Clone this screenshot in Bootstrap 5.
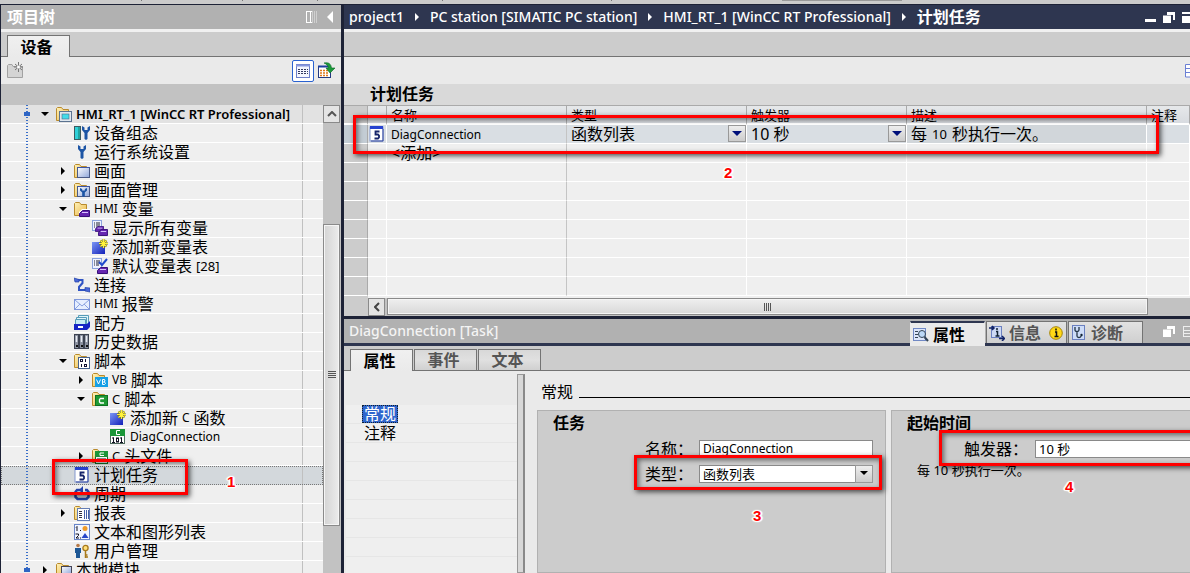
<!DOCTYPE html>
<html lang="zh-CN">
<head>
<meta charset="utf-8">
<meta name="viewport" content="width=device-width, initial-scale=1">
<title>project1 - 计划任务</title>
<link href="https://cdn.jsdelivr.net/npm/bootstrap@5.3.0/dist/css/bootstrap.min.css" rel="stylesheet">
<style>
:root{--ui:"Noto Sans","Noto Sans CJK SC",sans-serif;--navy:#2e3650;--ink:#1d2236;--bar:#b1b1b1;--strip:#ccc;--tool:#eaeaea;--line:#737373}
body{font-family:var(--ui);font-size:16px;line-height:18px;color:#000;background:var(--ink);height:100vh;overflow:hidden}
h1,h2,h3,p,ul{margin:0;padding:0}
button{border:0;background:none;padding:0;color:inherit;line-height:18px;white-space:nowrap}
a{color:inherit;text-decoration:none}
.lt{font-size:13px}
.ls{font-size:12px}
.tc{font-family:"Noto Sans CJK TC",sans-serif}
.ico{width:16px;height:16px;flex:none;display:block}
.topstrip{height:5px;background:#cbcbcb;border-bottom:1px solid var(--ink);flex:none}
.topstrip span{width:1px;height:1px;background:#777}
.topstrip .longmark{width:120px;background:#999}
.titlebar{height:24px;flex:none;color:#fff;font-size:16px;font-weight:700}
.titlebar .lt{font-size:14px;font-weight:500}
.bar-grey{background:var(--bar)}
.bar-navy{background:var(--navy)}
.tabstrip{background:var(--strip);border-bottom:1px solid var(--line);border-top:3px solid #f0f0f0;height:28px;flex:none}
.toolrow{background:var(--tool);height:27px;flex:none}
.tabbtn{border:1px solid var(--line);border-bottom:0;background:linear-gradient(#d8d8d8,#e0e0e0 50%,#d0d0d0);color:#555;font-size:16px;font-weight:700;width:63px;height:21px}
.tabbtn.on{background:linear-gradient(#f0f0f0,#eaeaea);color:#000;margin-bottom:-1px;height:22px}
/* project tree */
.side{width:340px;margin-left:1px;flex:none}
.treehost{background:#efefef;min-height:0}
.tree{list-style:none}
.tree li{height:19px;border-bottom:1px solid #fff;display:flex;align-items:center;white-space:nowrap;background:linear-gradient(90deg,transparent 301px,#c0c0c0 301px,#c0c0c0 302px,transparent 302px)}
.tree li:first-child{background-color:#e2e2e2;font-weight:600}
.tree li.sel{background-color:#d3d8dc;outline:1px dotted #777;outline-offset:-1px;border-bottom-color:#d3d8dc}
.tree button{width:14px;height:14px;margin-right:1px;flex:none;display:flex;align-items:center}
.tree button:empty{visibility:hidden}
.tree .ico{margin-right:4px}
.l0{padding-left:39px}.l1{padding-left:57px}.l2{padding-left:75px}.l3{padding-left:93px}
.tree .ico{margin-left:1px}
.guide{position:absolute;left:25px;top:0;bottom:0;width:2px;background:repeating-linear-gradient(#3a6fc8 0 1px,transparent 1px 3px)}
.knot{position:absolute;left:23px;width:6px;height:4px;background:#2f65c4}
.k1{top:7px}.k2{top:463px}
.vscroll{width:18px;background:#c2c2c2;flex:none}
.sbtn{width:17px;height:18px;border:1px solid #8a8a8a;background:#e4e4e4;display:flex;align-items:center;justify-content:center}
.vthumb{width:17px;height:302px;margin-top:101px;border:1px solid #8a8a8a;background:linear-gradient(90deg,#d4d4d4,#ececec);outline:1px solid #f5f5f5;outline-offset:-2px}
.grip{width:8px;height:8px;background:repeating-linear-gradient(#555 0 1px,transparent 1px 2px)}
.grip.gh{background:repeating-linear-gradient(90deg,#555 0 1px,transparent 1px 2px)}
/* task grid */
.work{margin-left:3px;min-width:0}
.gridtitle{background:#d9d9d9;height:21px;font-size:16px;line-height:20px;font-weight:700;padding-left:26px}
.tasks{table-layout:fixed;border-collapse:separate;border-spacing:0;width:100%}
.tasks th,.tasks td{height:19px;line-height:17px;padding:0 4px;border-bottom:1px solid #fff;border-right:1px solid #fff;white-space:nowrap;overflow:hidden;font-weight:400;background:#efefef}
.tasks thead th{height:20px;font-size:13px;line-height:16px;background:linear-gradient(#e6e8ea,#d8dbe0);border-right-color:#aaa;border-bottom:2px solid #fff;border-top:1px solid #aaa}
.tasks th:first-child{background:#ccc;border-right-color:#aaa}
.tasks td:nth-child(3){border-right-color:#c4c4c4}
.tasks tr.cur td{background:#d9dee3}
.tasks tr.cur th{background:#c3ccd4}
.tasks tr.cur td:nth-child(6){background:#d1d6da}
.tasks td.tight{padding:0 1px}
.tasks select{display:block;width:100%;height:18px;border:0;padding:0 18px 0 4px;font-size:16px;line-height:18px;appearance:none;background:transparent}
.cell{position:relative}
.tasks td.cell{padding:0}
.dd{position:absolute;right:0;top:0;width:18px;height:17px;border:1px solid #999;background:linear-gradient(#eee,#ccc);pointer-events:none;display:flex;align-items:center;justify-content:center}
.hscroll{background:linear-gradient(90deg,#ccc 24px,#c2c2c2 24px);height:18px;padding-left:24px}
.gridgap{height:2px;background:linear-gradient(90deg,#ccc 24px,#efefef 24px)}
.hthumb{width:761px;height:17px;margin-left:2px;border:1px solid #8a8a8a;background:linear-gradient(#efefef,#d8d8d8);outline:1px solid #f5f5f5;outline-offset:-2px}
/* inspector */
.inspbar{border-top:3px solid var(--ink);border-bottom:3px solid var(--navy);height:30px}
.itab{border:1px solid var(--line);border-bottom:0;background:linear-gradient(#e2e2e2,#cfcfcf);color:#555;font-size:16px;font-weight:700;height:22px;gap:4px;padding-left:2px}
.itab.on{background:#eaeaea;color:#000;border-color:#eaeaea;border-top:2px solid var(--navy);height:25px;margin-bottom:-3px}
.insptabs{height:25px;border-top:0}
.insp{background:var(--tool);min-height:0}
.cats{width:173px;padding-top:34px;flex:none}
.catrows{background:repeating-linear-gradient(#efefef 0 18px,#e6e6e6 18px 19px);margin-left:2px}
.catrows a{display:block;width:36px;height:19px;margin-left:16px;padding-left:2px;white-space:nowrap}
.catrows a.on{background:#2f65cd;color:#fff;outline:1px dotted #123;outline-offset:-1px;height:18px;margin-bottom:1px}
.splitter{width:8px;margin-top:3px;border:1px solid #999;border-right:2px solid #8a8a8a;background:#d8d8d8;flex:none}
.props{padding:12px 0 0 12px;min-width:0}
.rule{height:1px;background:#000;margin-top:10px}
.box{background:var(--strip);border:1px solid var(--bar);position:relative}
.box h3{font-size:16px;line-height:18px;font-weight:700;padding-left:15px;margin-top:3px}
.b-task{width:349px;flex:none}
.frow label{width:54px;white-space:nowrap}
.frow input,.frow select{height:18px;border:1px solid #8a8a8a;border-radius:0;background:#fff;font-size:13px;line-height:16px;padding:0 3px;appearance:none;color:#000}
.frow input.ls{font-size:12px}
.note{font-size:13px}
/* callouts */
.callout{position:absolute;border:3px solid #f00;box-shadow:2px 2px 5px rgba(0,0,0,.65),inset 2px 2px 5px rgba(0,0,0,.5);pointer-events:none}
.num{position:absolute;font:700 15px/18px "Liberation Sans",sans-serif;color:#f00;text-shadow:0 0 2px #fff,1px 1px 1px #fff,-1px -1px 1px #fff,1px -1px 1px #fff,-1px 1px 1px #fff,2px 0 1px #fff,-2px 0 1px #fff}
.c1{left:51px;top:354px;width:136px;height:36px}.n1{left:226px;top:368px}
.c2{left:9px;top:31px;width:806px;height:39px}.n2{left:380px;top:80px}
.c3{left:96px;top:44px;width:248px;height:35px}.n3{left:215px;top:96px}
.c4{left:47px;top:19px;right:-8px;height:36px}.n4{left:173px;top:67px}
</style>
</head>
<body class="d-flex flex-column">
<svg width="0" height="0" class="position-absolute" aria-hidden="true">
<defs>
<linearGradient id="gf" x1="0" y1="0" x2="1" y2="1"><stop offset="0" stop-color="#fff2b8"/><stop offset="1" stop-color="#e9b74c"/></linearGradient>
<linearGradient id="gb" x1="0" y1="0" x2="1" y2="1"><stop offset="0" stop-color="#7c96f5"/><stop offset="1" stop-color="#1220b8"/></linearGradient>
<linearGradient id="gw" x1="0" y1="0" x2="1" y2="1"><stop offset="0" stop-color="#fff"/><stop offset="1" stop-color="#8fa6da"/></linearGradient>
<symbol id="fold" viewBox="0 0 16 16"><path d="M.5 14.500V2.500L1.500 1.500H5.500L7 3.500H12.500V14.500Z" fill="url(#gf)" stroke="#b98a2c"/></symbol>
<symbol id="i-rt" viewBox="0 0 16 16"><use href="#fold"/><rect x="3.500" y="5.500" width="12" height="10" fill="#dfe7ee" stroke="#5b7390"/><rect x="6" y="8" width="7" height="5" fill="#44dce8" stroke="#4a6a88" stroke-width=".6"/></symbol>
<symbol id="wr" viewBox="0 0 8 14" preserveAspectRatio="none"><path d="M0 0L2.500 1.500V4H5.500V1.500L8 0V4L5.500 7V13L4 14L2.500 13V7L0 4Z" fill="#1d55a5"/></symbol>
<symbol id="i-dev" viewBox="0 0 16 16"><rect x=".5" y="1.500" width="6" height="13" fill="#2fd0d8" stroke="#3c5b60"/><path d="M5 2V14" stroke="#117766" stroke-width="1"/><use href="#wr" x="8" y="1" width="8" height="14"/></symbol>
<symbol id="i-wr" viewBox="0 0 16 16"><use href="#wr" x="4" y="1" width="8" height="14"/></symbol>
<symbol id="i-scr" viewBox="0 0 16 16"><use href="#fold"/><rect x="3.500" y="4.500" width="12" height="10" fill="url(#gw)" stroke="#4a5a86"/><path d="M3 4.500H16" stroke="#3d56a8"/></symbol>
<symbol id="i-scrm" viewBox="0 0 16 16"><use href="#i-scr"/><use href="#wr" x="6" y="6" width="7" height="9"/></symbol>
<symbol id="tag" viewBox="0 0 11 7" preserveAspectRatio="none"><path d="M.5 3.500L3.500 .5H10.500V6.500H.5Z" fill="#6526b0" stroke="#38107a"/><path d="M3 2.500H9" stroke="#d9c4ff"/></symbol>
<symbol id="i-tagf" viewBox="0 0 16 16"><use href="#fold"/><path d="M5 11L8 8H16V16H5Z" fill="#fff"/><use href="#tag" x="5" y="9" width="11" height="7"/></symbol>
<symbol id="doc" viewBox="0 0 10 11"><rect x=".5" y=".5" width="9" height="10" fill="#eef2ff" stroke="#8ba2dd"/><path d="M2 3h1M2 5h1M2 7h1M4 3h4M4 5h4M4 7h3" stroke="#222233"/></symbol>
<symbol id="i-tags" viewBox="0 0 16 16"><use href="#doc" width="10" height="11"/><use href="#tag" x="3" y="6" width="9" height="6"/><use href="#tag" x="6" y="9" width="10" height="7"/></symbol>
<symbol id="i-tagd" viewBox="0 0 16 16"><use href="#doc" width="10" height="11"/><path d="M7 4L10 7L15 1" stroke="#2149cc" stroke-width="2" fill="none"/><use href="#tag" x="5" y="9" width="11" height="7"/></symbol>
<symbol id="i-add" viewBox="0 0 16 16"><rect x="0" y="3" width="13" height="12" fill="url(#gb)"/><path d="M11.500 0V9M7 4.500H16M8.500 1.500L14.500 7.500M14.500 1.500L8.500 7.500" stroke="#6c6a10" stroke-width="2"/><path d="M11.500 0V9M7 4.500H16M8.500 1.500L14.500 7.500M14.500 1.500L8.500 7.500" stroke="#fff23c" stroke-width="1.200"/></symbol>
<symbol id="i-con" viewBox="0 0 16 16"><path d="M3 3H8.500V6L5 10V13H12" fill="none" stroke="#2f54c4" stroke-width="2"/><path d="M0 1L5 2.500V5H1ZM16 15L11 14V10.500L16 11Z" fill="#4a68d8" stroke="#2444a8" stroke-width=".7"/></symbol>
<symbol id="i-mail" viewBox="0 0 16 16"><rect x=".5" y="3.500" width="15" height="10" fill="#e6efff" stroke="#7d96da"/><path d="M1 4L8 10L15 4M1 13L6 8M15 13L10 8" fill="none" stroke="#8aa2e0"/></symbol>
<symbol id="i-rec" viewBox="0 0 16 16"><path d="M4.500 .5H14.500V9H4.500Z" fill="#dff4fa" stroke="#579cb8"/><path d="M2.500 2.500H12.500V10H2.500Z" fill="#dff4fa" stroke="#579cb8"/><path d="M1.500 4.500H11.500V10H1.500Z" fill="#c8ecf4" stroke="#579cb8"/><path d="M0 9H13L16 6V12L13 15H0Z" fill="#1524c4"/><rect x="4" y="11" width="5" height="2" fill="#fff"/></symbol>
<symbol id="i-hist" viewBox="0 0 16 16"><g fill="#8b91a0" stroke="#3d4352"><rect x=".5" y=".5" width="4" height="14"/><rect x="5.500" y=".5" width="4" height="14"/><rect x="10.500" y=".5" width="4" height="14"/></g><path d="M2.500 2V8M7.500 2V8M12.500 2V8" stroke="#e8ecf4" stroke-width="1.500"/><path d="M2 11h2v2h-2zM7 11h2v2h-2zM12 11h2v2h-2z" fill="#111"/></symbol>
<symbol id="i-scp" viewBox="0 0 16 16"><use href="#fold"/><rect x="4.500" y="4.500" width="11" height="11" fill="#fff" stroke="#47628e"/><g fill="none" stroke="#111133"><rect x="6.500" y="6.500" width="2" height="2"/><path d="M11.500 6V9M7.500 11V14"/><rect x="10.500" y="11.500" width="2" height="2"/></g></symbol>
<symbol id="i-vb" viewBox="0 0 16 16"><use href="#fold"/><rect x="3" y="5" width="13" height="10" fill="#16a0e6"/><path d="M4.500 7.500L6.500 12L8.500 7.500M10.500 7.500V12.500H12.500L13.500 11.500L12.500 10H10.500M12.500 10L13 8L12 7.500H10.500" stroke="#fff" fill="none"/></symbol>
<symbol id="i-c" viewBox="0 0 16 16"><use href="#fold"/><rect x="3.500" y="4.500" width="12" height="10" fill="#1f9a34" stroke="#0e7222"/><path d="M12 7.500H8.500L7.500 8.500V11L8.500 12H12" stroke="#fff" fill="none" stroke-width="1.300"/></symbol>
<symbol id="i-cf" viewBox="0 0 16 16"><rect x=".5" y=".5" width="14" height="14" fill="#fff" stroke="#4e685c"/><rect width="15" height="7" fill="#1b9638"/><path d="M10 1.500H6.500V5.500H10" stroke="#fff" fill="none"/><path d="M3.500 8.500V13.500M11.500 8.500V13.500M2 9H4M10 9H12M2 13.500H5M10 13.500H13" stroke="#111122" fill="none"/><rect x="6.500" y="9" width="2" height="4" fill="none" stroke="#111122"/></symbol>
<symbol id="i-ch" viewBox="0 0 16 16"><use href="#fold"/><rect x="3.500" y="3.500" width="12" height="12" fill="#fff" stroke="#127a2a"/><rect x="3" y="3" width="13" height="6" fill="#1b9638"/><path d="M12 5H8V7.500H12" stroke="#fff" fill="none"/><path d="M5 11H14M5 13.500H14" stroke="#222233"/></symbol>
<symbol id="i-five" viewBox="0 0 16 16"><rect x="1" y="1" width="13" height="14" fill="#fff" stroke="#8497cf"/><rect x="1" y="0" width="13" height="3" fill="#2743d0"/><path d="M14 3V15H2" stroke="#3349a0" fill="none"/><path d="M10.500 5.500H6.500V8.500H9L10 9.500V11.500L9 12.500H5.500" fill="none" stroke="#16246a" stroke-width="1.800"/></symbol>
<symbol id="i-cyc" viewBox="0 0 16 16"><path d="M8 4H3L1.500 6V11L3.500 13H12.500L14.500 11V6L13 4H11" fill="none" stroke="#2544ac" stroke-width="2.500"/><path d="M5 4L9 0V8Z" fill="#2544ac"/></symbol>
<symbol id="i-rep" viewBox="0 0 16 16"><use href="#fold"/><rect x="3.500" y="3.500" width="12" height="12" fill="#fff" stroke="#667eb5"/><path d="M5 6.500H8M5 8.500H8M5 10.500H8M5 12.500H8" stroke="#333344"/><path d="M10.500 5V14M12.500 5V14M14.500 5V14" stroke="#4661a8"/></symbol>
<symbol id="i-tg" viewBox="0 0 16 16"><rect x=".5" y=".5" width="15" height="15" fill="#f2f6ff" stroke="#6885c9"/><path d="M2 3.500L3 2.500V7M1.500 10H4.500V11.500L2 14H5M6 6.500h1M6 14h1" stroke="#111122" fill="none"/><circle cx="11" cy="4.500" r="2.500" fill="#f09b28"/><path d="M11 9L14.500 14H7.500Z" fill="#2746c8"/></symbol>
<symbol id="i-usr" viewBox="0 0 16 16"><circle cx="4" cy="2.500" r="1.800" fill="#b57a4a"/><path d="M1 5H7V10H6V15H2V10H1Z" fill="#1d5795"/><path d="M11.500 8V15M11.500 14H14M11.500 12H13.500" stroke="#a8791a" stroke-width="1.500"/><circle cx="11.500" cy="5" r="2.600" fill="#ffe07a" stroke="#a8791a" stroke-width="1.300"/></symbol>
<symbol id="i-loc" viewBox="0 0 16 16"><use href="#fold"/><rect x="5.500" y="4.500" width="10" height="8" fill="url(#gw)" stroke="#444455"/><path d="M4 15.500H16" stroke="#444455"/></symbol>
<symbol id="dn" viewBox="0 0 10 10"><path d="M1 3H9L5 7Z" fill="#000"/></symbol>
<symbol id="rt" viewBox="0 0 10 10"><path d="M3 1L7 5L3 9Z" fill="#000"/></symbol>
<symbol id="crumb" viewBox="0 0 6 10"><path d="M1 1L5 5L1 9Z" fill="#fff"/></symbol>
<symbol id="wins" viewBox="0 0 12 11"><path d="M4 0H12V8H10V3H4Z" fill="#fff"/><rect y="3.500" width="8" height="7.500" fill="#fff"/></symbol>
</defs>
</svg>

<div class="topstrip d-flex"><span style="margin-left:141px"></span><span style="margin-left:100px"></span><span style="margin-left:74px"></span><span style="margin-left:124px"></span><span style="margin-left:168px"></span><span class="longmark ms-auto" style="margin-right:288px"></span></div>
<div class="d-flex flex-grow-1" style="min-height:0">

<aside class="side d-flex flex-column">
  <header class="titlebar bar-grey d-flex align-items-center pe-2" style="padding-left:6px">
    <h1 class="m-0" style="font:inherit">项目树</h1>
    <svg class="ms-auto" style="margin-right:10px" width="11" height="12" viewBox="0 0 11 12"><path d="M0 .5H6M.5 0V12M0 11.500H6M4.500 0V12" stroke="#fff" fill="none"/><path d="M6.500 0V12M8.500 0V12M10.500 0V12" stroke="#ddd" opacity=".7"/></svg>
    <button aria-label="折叠"><svg class="d-block" width="6" height="12" viewBox="0 0 6 12"><path d="M6 0V12L0 6Z" fill="#fff"/></svg></button>
  </header>
  <div class="tabstrip d-flex align-items-end" style="padding-left:6px"><button class="tabbtn on" style="padding-right:4px">设备</button></div>
  <div class="toolrow d-flex align-items-center" style="padding:0 6px">
    <button aria-label="新建"><svg class="d-block" width="17" height="17" viewBox="0 0 17 17"><path d="M.5 15.500V3.500L1.500 2.500H5L6 4.500H15.500V15.500Z" fill="#d4d4d4" stroke="#a2a2a2"/><path d="M11.500 0V10M7 5H16M8 2L15 8M15 2L8 8" stroke="#777"/><circle cx="11.500" cy="5" r="1.500" fill="#fff"/></svg></button>
    <button class="ms-auto bg-white d-flex align-items-center justify-content-center" style="width:22px;height:22px;border:1px solid #2a62d0;border-radius:2px" aria-label="详细视图"><svg width="14" height="14" viewBox="0 0 14 14"><rect x=".5" y=".5" width="13" height="13" fill="#f5f7ff" stroke="#6c7fc8"/><path d="M0 1.500H14" stroke="#8797dd" stroke-width="2"/><path d="M2 5.500H12M2 7.500H12M2 9.500H12" stroke="#333a60" stroke-dasharray="2 1"/></svg></button>
    <button class="ms-1" aria-label="打开"><svg class="d-block" width="17" height="17" viewBox="0 0 17 17"><rect x=".5" y="4.500" width="12" height="11" fill="#fff" stroke="#243a80"/><path d="M0 4.500H12" stroke="#1c3fa0" stroke-width="2"/><path d="M2 8.500H11M2 11H11M2 13.500H11" stroke="#e07818" stroke-width="1.600" stroke-dasharray="2 1"/><path d="M6 1C11 0 13 2 13.500 6H17L12 11L8 6H10.500C10 4 9 2 6 1Z" fill="#1c9a3c" stroke="#0c6a24" stroke-width=".6"/></svg></button>
  </div>
  <div style="height:21px;background:#c2c2c2;flex:none"></div>
  <div class="treehost d-flex flex-grow-1">
    <div class="position-relative flex-grow-1">
    <ul class="tree">
      <li class="l0"><button aria-label="折叠"><svg width="10" height="10"><use href="#dn"/></svg></button><svg class="ico"><use href="#i-rt"/></svg><span class="lt">HMI_RT_1 [WinCC RT Professional]</span></li>
      <li class="l1"><button></button><svg class="ico"><use href="#i-dev"/></svg>设备组态</li>
      <li class="l1"><button></button><svg class="ico"><use href="#i-wr"/></svg>运行系统设置</li>
      <li class="l1"><button aria-label="展开"><svg width="10" height="10"><use href="#rt"/></svg></button><svg class="ico"><use href="#i-scr"/></svg>画面</li>
      <li class="l1"><button aria-label="展开"><svg width="10" height="10"><use href="#rt"/></svg></button><svg class="ico"><use href="#i-scrm"/></svg>画面管理</li>
      <li class="l1"><button aria-label="折叠"><svg width="10" height="10"><use href="#dn"/></svg></button><svg class="ico"><use href="#i-tagf"/></svg><span class="ls me-1">HMI</span>变量</li>
      <li class="l2"><button></button><svg class="ico"><use href="#i-tags"/></svg>显示所有变量</li>
      <li class="l2"><button></button><svg class="ico"><use href="#i-add"/></svg>添加新变量表</li>
      <li class="l2"><button></button><svg class="ico"><use href="#i-tagd"/></svg>默认变量表<span class="lt ms-1">[28]</span></li>
      <li class="l1"><button></button><svg class="ico"><use href="#i-con"/></svg>连接</li>
      <li class="l1"><button></button><svg class="ico"><use href="#i-mail"/></svg><span class="ls me-1">HMI</span>报警</li>
      <li class="l1"><button></button><svg class="ico"><use href="#i-rec"/></svg>配方</li>
      <li class="l1"><button></button><svg class="ico"><use href="#i-hist"/></svg>历史数据</li>
      <li class="l1"><button aria-label="折叠"><svg width="10" height="10"><use href="#dn"/></svg></button><svg class="ico"><use href="#i-scp"/></svg>脚本</li>
      <li class="l2"><button aria-label="展开"><svg width="10" height="10"><use href="#rt"/></svg></button><svg class="ico"><use href="#i-vb"/></svg><span class="ls me-1">VB</span>脚本</li>
      <li class="l2"><button aria-label="折叠"><svg width="10" height="10"><use href="#dn"/></svg></button><svg class="ico"><use href="#i-c"/></svg><span class="lt me-1">C</span>脚本</li>
      <li class="l3"><button></button><svg class="ico"><use href="#i-add"/></svg>添加新<span class="ls mx-1">C</span>函数</li>
      <li class="l3"><button></button><svg class="ico"><use href="#i-cf"/></svg><span class="ls">DiagConnection</span></li>
      <li class="l2"><button aria-label="展开"><svg width="10" height="10"><use href="#rt"/></svg></button><svg class="ico"><use href="#i-ch"/></svg><span class="lt me-1">C</span>头文件</li>
      <li class="l1 sel"><button></button><svg class="ico"><use href="#i-five"/></svg>计划任务</li>
      <li class="l1"><button></button><svg class="ico"><use href="#i-cyc"/></svg>周期</li>
      <li class="l1"><button aria-label="展开"><svg width="10" height="10"><use href="#rt"/></svg></button><svg class="ico"><use href="#i-rep"/></svg>报表</li>
      <li class="l1"><button></button><svg class="ico"><use href="#i-tg"/></svg>文本和图形列表</li>
      <li class="l1"><button></button><svg class="ico"><use href="#i-usr"/></svg>用户管理</li>
      <li class="l0"><button aria-label="展开"><svg width="10" height="10"><use href="#rt"/></svg></button><svg class="ico"><use href="#i-loc"/></svg>本地模块</li>
    </ul>
      <div class="guide"></div><div class="knot k1"></div><div class="knot k2"></div>
      <div class="callout c1"></div><div class="num n1">1</div>
    </div>
    <div class="vscroll">
      <button class="sbtn" aria-label="向上"><svg width="10" height="6" viewBox="0 0 10 6"><path d="M1 5L5 1L9 5" fill="none" stroke="#555" stroke-width="2"/></svg></button>
      <div class="vthumb d-flex align-items-center justify-content-center"><div class="grip"></div></div>
    </div>
  </div>
</aside>

<main class="work flex-grow-1 d-flex flex-column">
  <nav class="titlebar bar-navy d-flex align-items-center text-nowrap" style="padding-left:5px">
    <a href="#" class="lt">project1</a><svg style="margin:0 10px" width="6" height="10"><use href="#crumb"/></svg>
    <a href="#" class="lt">PC station [SIMATIC PC station]</a><svg style="margin:0 10px" width="6" height="10"><use href="#crumb"/></svg>
    <a href="#" class="lt">HMI_RT_1 [WinCC RT Professional]</a><svg style="margin:0 10px" width="6" height="10"><use href="#crumb"/></svg>
    <a href="#">计划任务</a>
    <span class="ms-auto d-flex align-items-end overflow-hidden" style="height:12px;gap:7px">
      <button aria-label="最小化"><svg class="d-block" width="11" height="12" viewBox="0 0 11 12"><rect y="8" width="11" height="3" fill="#fff"/></svg></button>
      <button aria-label="还原"><svg class="d-block" width="12" height="11"><use href="#wins"/></svg></button>
      <svg class="d-block" width="8" height="11" viewBox="0 0 8 11"><path d="M0 0H8V2H0ZM0 4H8V11H0Z" fill="#fff"/></svg>
    </span>
  </nav>
  <div class="tabstrip"></div>
  <div class="toolrow d-flex align-items-center"><svg class="ms-auto" width="5" height="14" viewBox="0 0 5 14"><path d="M5 .5H.5V13H5M1 4.500H5M1 8.500H5" fill="#fff" stroke="#6a7fd4"/></svg></div>
  <section class="position-relative">
    <h2 class="gridtitle">计划任务</h2>
    <table class="tasks">
      <colgroup><col style="width:24px"><col style="width:19px"><col style="width:180px"><col style="width:180px"><col style="width:160px"><col style="width:240px"><col></colgroup>
      <thead><tr><th></th><th></th><th>名称</th><th>类型</th><th>触发器</th><th>描述</th><th>注释</th></tr></thead>
      <tbody>
        <tr class="cur"><th></th><td class="tight"><svg class="ico"><use href="#i-five"/></svg></td><td><span class="ls d-block">DiagConnection</span></td>
          <td class="cell"><select aria-label="类型"><option>函数列表</option></select><span class="dd"><svg width="10" height="6" viewBox="0 0 10 6"><path d="M0 0H10L5 5Z" fill="#00107a"/></svg></span></td>
          <td class="cell"><select aria-label="触发器"><option>10 秒</option></select><span class="dd"><svg width="10" height="6" viewBox="0 0 10 6"><path d="M0 0H10L5 5Z" fill="#00107a"/></svg></span></td>
          <td><span class="d-flex align-items-center" style="height:18px;gap:5px">每<span class="lt">10</span>秒执行一次。</span></td><td></td></tr>
        <tr><th></th><td></td><td>&lt;添加&gt;</td><td></td><td></td><td></td><td></td></tr>
        <tr><th></th><td></td><td></td><td></td><td></td><td></td><td></td></tr>
        <tr><th></th><td></td><td></td><td></td><td></td><td></td><td></td></tr>
        <tr><th></th><td></td><td></td><td></td><td></td><td></td><td></td></tr>
        <tr><th></th><td></td><td></td><td></td><td></td><td></td><td></td></tr>
        <tr><th></th><td></td><td></td><td></td><td></td><td></td><td></td></tr>
        <tr><th></th><td></td><td></td><td></td><td></td><td></td><td></td></tr>
        <tr><th></th><td></td><td></td><td></td><td></td><td></td><td></td></tr>
      </tbody>
    </table>
    <div class="gridgap"></div>
    <div class="hscroll d-flex">
      <button class="sbtn" aria-label="向左"><svg width="6" height="10" viewBox="0 0 6 10"><path d="M5 1L1 5L5 9" fill="none" stroke="#444" stroke-width="2"/></svg></button>
      <div class="hthumb d-flex align-items-center justify-content-center"><div class="grip gh"></div></div>
    </div>
    <div class="callout c2"></div><div class="num n2">2</div>
  </section>

  <header class="titlebar inspbar bar-grey d-flex align-items-end">
    <h2 class="lt text-nowrap align-self-center" style="padding-left:5px;color:#f4f4f4">DiagConnection [Task]</h2>
    <div class="ms-auto d-flex align-items-end">
      <button class="itab on d-flex align-items-center" style="width:75px"><svg width="16" height="16" viewBox="0 0 16 16"><rect x=".5" y="1.500" width="12" height="12" fill="#dce5fa" stroke="#7088c4"/><path d="M2 4.500H5M2 7.500H5M2 10.500H5" stroke="#334455"/><circle cx="9" cy="7" r="3.500" fill="#bcd8f6" stroke="#334455"/><path d="M11.500 10L15 14" stroke="#334455" stroke-width="2"/></svg>属性</button>
      <button class="itab d-flex align-items-center" style="width:81px;margin-left:1px"><svg width="16" height="16" viewBox="0 0 16 16"><rect x="2.500" y="1.500" width="10" height="11" fill="#cdd9f4" stroke="#6b80c0"/><path d="M0 3H5M3 1L5 3L3 5M10 13.500H15M13 11L15.500 13.500L13 16" stroke="#112266" fill="none" stroke-width="1.500"/><path d="M7 6.500H8.500V11M6.500 11H10.500M8 3V5" stroke="#112233" stroke-width="1.500" fill="none"/></svg>信息<svg class="ms-1" width="14" height="14" viewBox="0 0 14 14"><circle cx="7" cy="7" r="6.300" fill="#ffd816" stroke="#a58408"/><path d="M6 6H7.500V10.500M5.500 10.500H9.500M7 2.500V4.500" stroke="#111" stroke-width="1.500" fill="none"/></svg></button>
      <button class="itab d-flex align-items-center" style="width:75px;margin-left:1px"><svg width="16" height="16" viewBox="0 0 16 16"><rect x="1.500" y=".5" width="12" height="14" fill="#cddcf8" stroke="#6b80c0"/><path d="M4 2V5C4 7 8 7 8 5V2M6 7V11C6 13 10 13 10 11" stroke="#223344" fill="none" stroke-width="1.300"/><circle cx="10.500" cy="10" r="1.200" fill="#112233"/></svg>诊断</button>
    </div>
    <span class="d-flex gap-2 align-self-center overflow-hidden" style="width:27px;margin-left:20px"><svg class="flex-shrink-0" width="12" height="11"><use href="#wins"/></svg><svg class="flex-shrink-0" width="9" height="11" viewBox="0 0 9 11"><path d="M0 .5H9M0 4.500H9M0 7.500H9M0 10.500H9M.5 0V11" stroke="#eee"/></svg></span>
  </header>
  <div class="tabstrip insptabs d-flex align-items-end" style="gap:1px;padding-left:6px">
    <button class="tabbtn on" style="padding-right:4px">属性</button><button class="tabbtn" style="padding-right:4px">事件</button><button class="tabbtn" style="padding-right:4px">文本</button>
  </div>
  <div class="insp flex-grow-1 d-flex">
    <nav class="cats d-flex flex-column"><div class="catrows flex-grow-1"><a href="#" class="on">常规</a><a href="#">注释</a></div></nav>
    <div class="splitter"></div>
    <section class="props flex-grow-1 d-flex flex-column">
      <div class="d-flex align-items-center"><h2 class="text-nowrap" style="font-size:16px;line-height:18px;font-weight:400;margin:0 6px 0 4px">常规</h2><div class="rule flex-grow-1"></div></div>
      <div class="d-flex flex-grow-1 overflow-hidden" style="gap:5px;margin-top:9px">
        <section class="box b-task">
          <h3>任务</h3>
          <div class="frow d-flex align-items-center" style="margin:7px 0 0 107px"><label for="nm">名称<span class="tc">：</span></label><input id="nm" class="ls" value="DiagConnection" style="width:174px"></div>
          <div class="frow d-flex align-items-center" style="margin:6px 0 0 107px"><label for="tp">类型<span class="tc">：</span></label><div class="position-relative"><select id="tp" class="d-block" style="width:174px"><option>函数列表</option></select><span class="dd" style="height:18px"><svg width="8" height="5" viewBox="0 0 8 5"><path d="M0 0H8L4 4Z"/></svg></span></div></div>
          <div class="callout c3"></div><div class="num n3">3</div>
        </section>
        <section class="box flex-grow-1">
          <h3>起始时间</h3>
          <div class="frow d-flex align-items-center" style="margin:7px 0 0 72px"><label for="tr" style="width:71px">触发器<span class="tc">：</span></label><input id="tr" value="10 秒" class="flex-grow-1 border-end-0" style="min-width:0"></div>
          <p class="note" style="margin:3px 0 0 25px">每 10 秒执行一次。</p>
          <div class="callout c4"></div><div class="num n4">4</div>
        </section>
      </div>
    </section>
  </div>
</main>
</div>
<script src="https://cdn.jsdelivr.net/npm/bootstrap@5.3.0/dist/js/bootstrap.bundle.min.js"></script>
</body>
</html>
